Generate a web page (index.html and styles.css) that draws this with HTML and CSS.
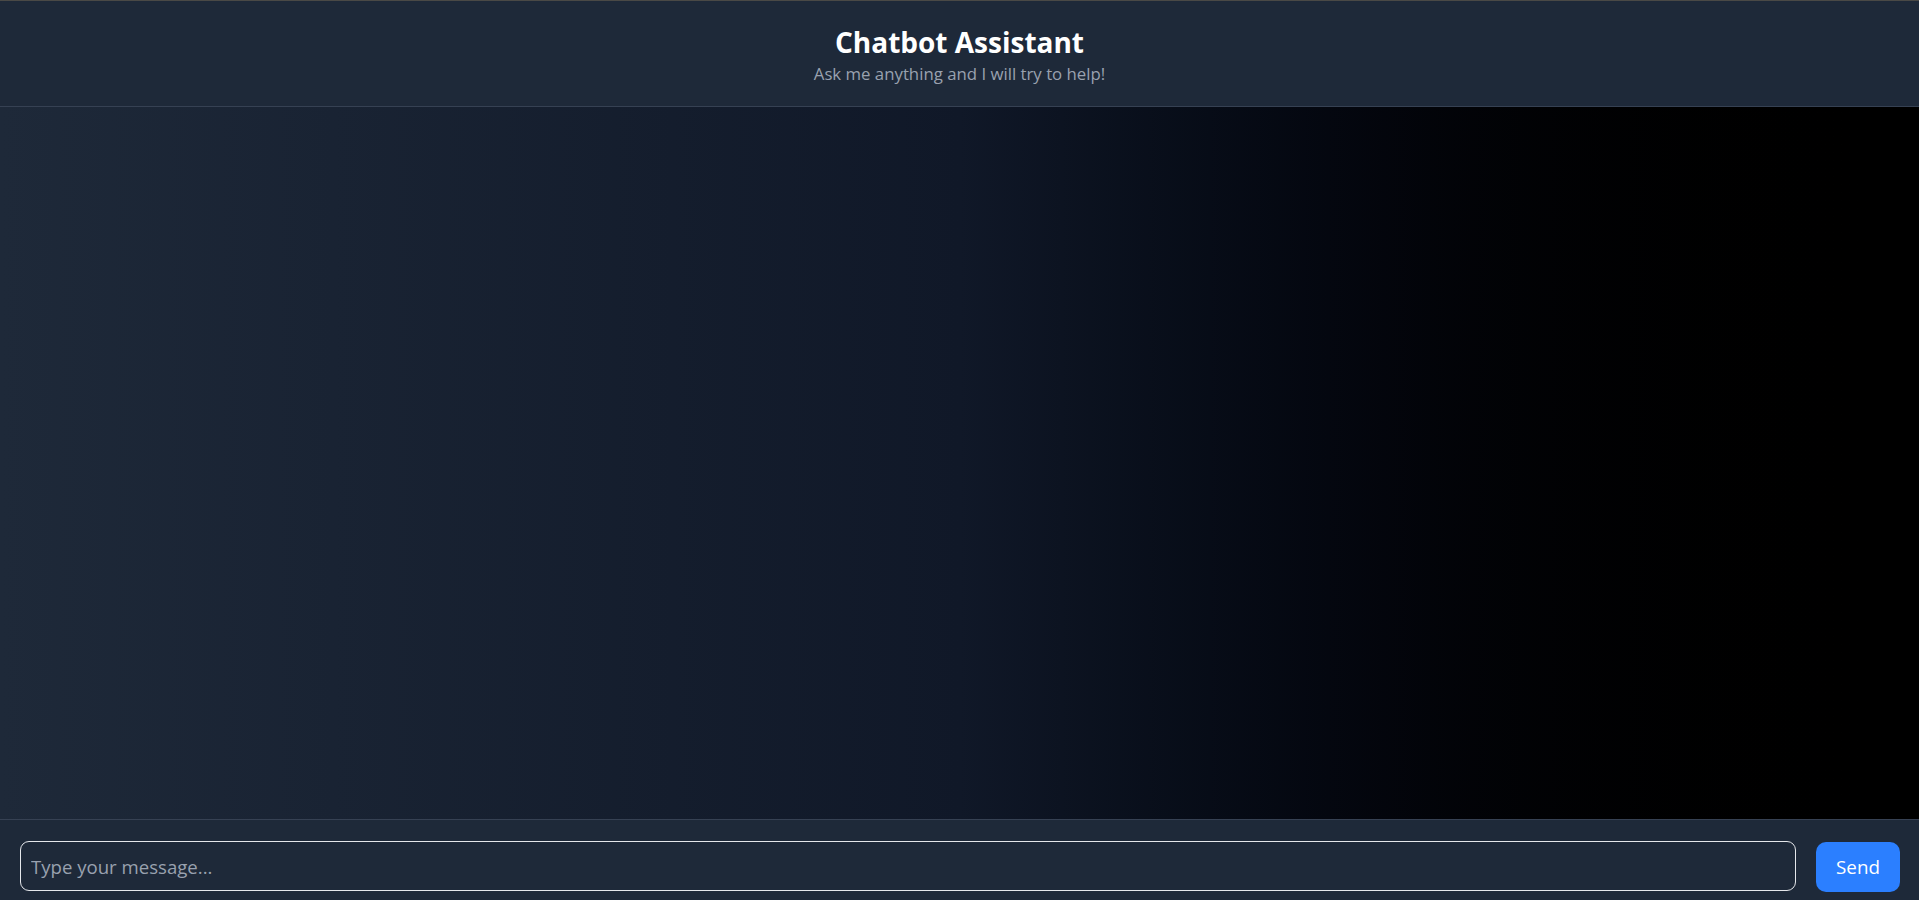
FILE: index.html
```html
<!DOCTYPE html>
<html lang="en">
<head>
<meta charset="utf-8">
<title>Chatbot Assistant</title>
<link rel="stylesheet" href="styles.css">
</head>
<body>
<div class="app">
  <header class="header">
    <h1 class="title">Chatbot Assistant</h1>
    <p class="subtitle">Ask me anything and I will try to help!</p>
  </header>
  <main class="messages"></main>
  <footer class="composer">
    <input class="composer-input" type="text" placeholder="Type your message...">
    <button class="send-btn" type="button">Send</button>
  </footer>
</div>
</body>
</html>
```
FILE: styles.css
```css
* { box-sizing: border-box; }
html, body {
  margin: 0;
  padding: 0;
  height: 100%;
  overflow: hidden;
}
body {
  font-family: "Open Sans", "Liberation Sans", sans-serif;
  background: #1e2939;
  color: #fff;
}
.app {
  display: flex;
  flex-direction: column;
  height: 100vh;
}
.header {
  border-top: 1px solid #4a4946;
  border-bottom: 1px solid #364153;
  background: #1e2939;
  padding: 23px 0 18px;
  text-align: center;
}
.title {
  margin: 0;
  font-size: 28px;
  line-height: 36px;
  font-weight: 700;
  color: #ffffff;
}
.subtitle {
  margin: 0;
  font-size: 16.8px;
  line-height: 28px;
  color: #99a1af;
}
.messages {
  flex: 1;
  background: linear-gradient(to right in oklab, #1e2939 0%, #101828 50%, #000000 100%);
}
.composer {
  border-top: 1px solid #364153;
  background: #1e2939;
  display: flex;
  gap: 20px;
  padding: 21px 19px 0 20px;
  height: 81px;
}
.composer-input {
  flex: 1;
  height: 50px;
  border: 1px solid #e5e7eb;
  border-radius: 9px;
  background: transparent;
  padding: 0 10px;
  font-family: inherit;
  font-size: 18.6px;
  color: #fff;
  outline: none;
}
.composer-input::placeholder {
  color: #99a1af;
  opacity: 1;
}
.send-btn {
  width: 84px;
  height: 50px;
  margin-top: 1px;
  border: none;
  border-radius: 10px;
  background: #2b7fff;
  color: #fff;
  font-family: inherit;
  font-size: 18.8px;
}
```
